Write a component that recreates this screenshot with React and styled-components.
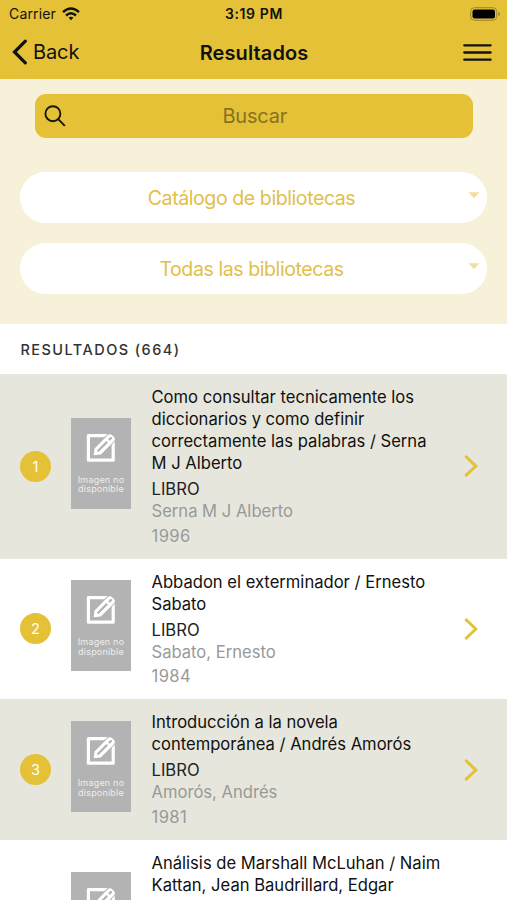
import styled, { createGlobalStyle } from "styled-components";

const results = [
    { id: 1, title: ["Como consultar tecnicamente los", "diccionarios y como definir", "correctamente las palabras / Serna", "M J Alberto"], author: "Serna M J Alberto", year: "1996" },
    { id: 2, title: ["Abbadon el exterminador / Ernesto", "Sabato"], author: "Sabato, Ernesto", year: "1984" },
    { id: 3, title: ["Introducción a la novela", "contemporánea / Andrés Amorós"], author: "Amorós, Andrés", year: "1981" },
];

// the row at the fold, only its top part is on screen
const nextTitle = ["Análisis de Marshall McLuhan / Naim", "Kattan, Jean Baudrillard, Edgar"];

const EditIcon = () => (
    <svg width="30" height="30" viewBox="0 0 30 30" fill="none">
        <path d="M27.2 6V27.2H2.4V2.6H23" stroke="#fff" strokeWidth="3.2" strokeLinejoin="round" />
        <path d="M13 17L27 3" stroke="#b3b3b3" strokeWidth="10.5" />
        <path d="M7.6 22.2L8.6 15.6L21.4 2.6Q24 0.2 26.4 2.4L27.8 3.8Q30 6.2 27.8 8.6L14.8 21.4Z" fill="#fff" />
        <path d="M12.2 17.8L20.6 9.4M23.6 6.4L24.9 5.1" stroke="#b3b3b3" strokeWidth="2.2" strokeLinecap="round" />
    </svg>
)

const Lines = ({ title }) => (
    <Title>{title.map((line) => <Line key={line}>{line}</Line>)}</Title>
)

const Result = ({ id, title, author, year }) => (
    <Row $shaded={id % 2 === 1}>
        <Badge>{id}</Badge>
        <CoverBox>
            <EditIcon />
            <CoverText>Imagen no</CoverText>
            <CoverText>disponible</CoverText>
        </CoverBox>
        <Info>
            <Lines title={title} />
            <Kind>LIBRO</Kind>
            <Author>{author}</Author>
            <Year>{year}</Year>
        </Info>
        <svg width="15" height="24" viewBox="0 0 15 24" fill="none">
            <path d="M1.3 2L11.8 12L1.3 22" stroke="#e4c137" strokeWidth="3" />
        </svg>
    </Row>
)

const App = () => (
    <Screen>
        <GlobalStyle />
        <Top>
            <StatusBar>
                <Carrier>
                    Carrier
                    <svg width="18" height="14" viewBox="0 0 18 14" fill="none" stroke="#111" strokeWidth="2.5">
                        <path d="M1 5.1Q9 -2 17 5.1" />
                        <path d="M4 8.5Q9 4.1 14 8.5" />
                        <path d="M6.5 10.6Q9 8.7 11.5 10.6L9 13.3Z" fill="#111" stroke="none" />
                    </svg>
                </Carrier>
                <Clock>3:19 PM</Clock>
                <Battery>
                    <svg width="31" height="14" viewBox="0 0 31 14">
                        <rect x="0.7" y="0.7" width="26" height="12.6" rx="3.8" fill="none" stroke="#9b8430" strokeWidth="1" />
                        <rect x="2.5" y="2.5" width="22.5" height="9" rx="2.2" fill="#000" />
                        <path d="M28.2 4.7Q30 5.6 30 7Q30 8.4 28.2 9.3Z" fill="#9b8430" />
                    </svg>
                </Battery>
            </StatusBar>
            <NavBar>
                <Back>
                    <svg width="17" height="28" viewBox="0 0 17 28" fill="none">
                        <path d="M15.3 3.2L4.5 14L15.3 24.8" stroke="#111" strokeWidth="3.2" strokeLinecap="round" />
                    </svg>
                    Back
                </Back>
                <Heading>Resultados</Heading>
                <Menu>
                    <svg width="29" height="20" viewBox="0 0 29 20" stroke="#111" strokeWidth="2.3" strokeLinecap="round">
                        <path d="M1.3 3.3H27.6M1.3 10.5H27.6M1.3 17.7H27.6" />
                    </svg>
                </Menu>
            </NavBar>
        </Top>
        <Filters>
            <Search>
                <svg width="22" height="22" viewBox="0 0 22 22" fill="none" stroke="#1a1700" strokeWidth="1.9">
                    <circle cx="8.9" cy="8.7" r="7.5" />
                    <path d="M14.2 14.2L20.8 20.8" />
                </svg>
                <Placeholder>Buscar</Placeholder>
            </Search>
            {["Catálogo de bibliotecas", "Todas las bibliotecas"].map((label) => (
                <Select key={label}>
                    <SelectLabel>{label}</SelectLabel>
                    <svg width="12" height="7" viewBox="0 0 12 7">
                        <path d="M0.5 0.3H11.5L6 6.3Z" fill="#f2dfa0" />
                    </svg>
                </Select>
            ))}
        </Filters>
        <ListHeader>RESULTADOS (664)</ListHeader>
        {results.map((item) => <Result key={item.id} {...item} />)}
        <FoldRow>
            <FoldCover>
                <EditIcon />
            </FoldCover>
            <Info>
                <Lines title={nextTitle} />
            </Info>
        </FoldRow>
    </Screen>
)

export default App;


const GlobalStyle = createGlobalStyle`
  * {
    box-sizing: border-box;
  }
  body {
    margin: 0;
    overflow: hidden;
    font-family: Inter, "Liberation Sans", sans-serif;
    color: #111;
  }
  svg {
    display: block;
    flex: none;
  }
`

const Screen = styled.div`
  width: 507px;
  height: 900px;
  overflow: hidden;
  background: #fff;
`

const Top = styled.header`
  height: 79px;
  background: #e4c137;
`

const StatusBar = styled.div`
  display: grid;
  grid-template-columns: 1fr auto 1fr;
  align-items: center;
  height: 27px;
  padding: 0 6px 0 9px;
`

const Carrier = styled.div`
  display: flex;
  align-items: center;
  gap: 6px;
  font-size: 14px;
  letter-spacing: 0.15px;
`

const Clock = styled.div`
  padding-right: 2px;
  font-size: 14px;
  font-weight: 600;
  letter-spacing: 0.6px;
`

const Battery = styled.div`
  display: flex;
  justify-content: flex-end;
`

const NavBar = styled.nav`
  display: grid;
  grid-template-columns: 1fr auto 1fr;
  align-items: center;
  height: 50px;
  padding: 0 15px 0 10px;
`

const Back = styled.div`
  display: flex;
  align-items: center;
  gap: 6px;
  font-size: 20px;
  letter-spacing: -0.1px;
`

const Heading = styled.h1`
  margin: 0;
  padding: 1px 0 0 6px;
  font-size: 20px;
  font-weight: 600;
  letter-spacing: 0.1px;
`

const Menu = styled.div`
  display: flex;
  justify-content: flex-end;
`

const Filters = styled.section`
  height: 245px;
  padding: 15px 20px 0;
  background: #f8f1da;
`

const Search = styled.div`
  display: flex;
  align-items: center;
  height: 43.5px;
  margin: 0 14.5px 34.5px 15px;
  padding: 0 9px;
  border-radius: 11px;
  background: #e4c137;
`

const Placeholder = styled.span`
  flex: 1;
  text-align: center;
  padding-right: 20px;
  font-size: 20px;
  letter-spacing: -0.2px;
  color: #877221;
`

const Select = styled.div`
  display: flex;
  align-items: center;
  height: 51px;
  margin-bottom: 19.7px;
  padding: 0 7px 0 16px;
  border-radius: 26px;
  background: #fff;

  svg {
    margin-bottom: 4px;
  }
`

const SelectLabel = styled.span`
  flex: 1;
  text-align: center;
  padding: 1px 1px 0 0;
  font-size: 19.6px;
  letter-spacing: -0.45px;
  color: #e2c04a;
`

const ListHeader = styled.h2`
  display: flex;
  align-items: center;
  height: 49.8px;
  margin: 0;
  padding: 2px 0 0 20.5px;
  font-size: 14.5px;
  font-weight: 500;
  letter-spacing: 1.45px;
  color: #333;
`

const Row = styled.article`
  display: flex;
  align-items: center;
  padding: 12px 28px 12px 20px;
  background: ${(props) => (props.$shaded ? "#e6e6dc" : "#fff")};
`

const FoldRow = styled(Row)`
  align-items: flex-start;
  padding-left: 71px;
  padding-bottom: 0;
`

const Badge = styled.div`
  flex: none;
  width: 31px;
  height: 31px;
  border-radius: 50%;
  background: #e4c137;
  color: #fff;
  font-size: 14.5px;
  line-height: 32px;
  text-align: center;
`

const CoverBox = styled.div`
  display: flex;
  flex-direction: column;
  align-items: center;
  flex: none;
  width: 60px;
  height: 91px;
  margin: 0 20.5px 6px 20px;
  padding-top: 15px;
  background: #b3b3b3;

  svg {
    margin-bottom: 12px;
  }
`

const FoldCover = styled(CoverBox)`
  margin: 20px 20.5px 0 0;
`

const CoverText = styled.span`
  font-size: 9px;
  line-height: 9.8px;
  letter-spacing: 0.2px;
  color: #eee;
`

const Info = styled.div`
  flex: 1;
  font-size: 16.6px;
  line-height: 22px;
  white-space: nowrap;
`

const Title = styled.h3`
  margin: 0 0 4.1px;
  font-size: inherit;
  font-weight: 400;
`

const Line = styled.span`
  display: block;
`

const Kind = styled.div`
  color: #222;
`

const Author = styled.div`
  color: #999;
`

const Year = styled.div`
  margin-top: 2.7px;
  letter-spacing: 0.4px;
  color: #999;
`
